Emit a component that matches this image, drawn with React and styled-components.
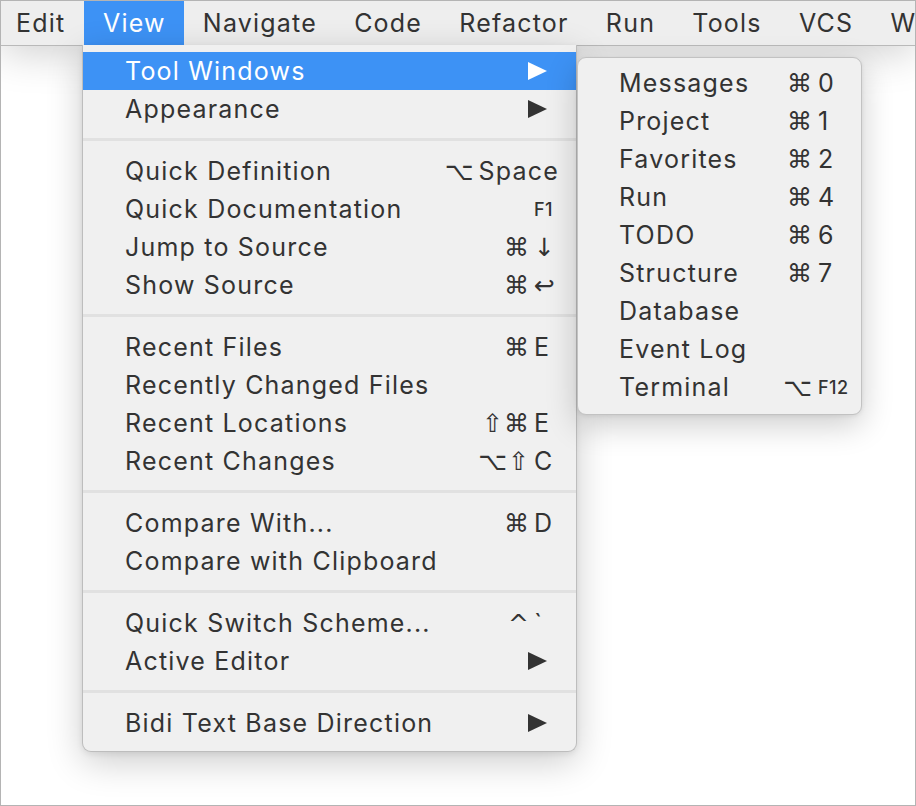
import React from 'react';
import styled, { createGlobalStyle } from 'styled-components';

const GlobalStyle = createGlobalStyle`
  html, body {
    margin: 0;
    padding: 0;
    background: #ffffff;
  }
  body {
    font-family: Inter, "Noto Sans", "DejaVu Sans", sans-serif;
    -webkit-font-smoothing: antialiased;
  }
`;

const BLUE = '#3d92f5';
const TEXT = '#333333';

const Frame = styled.div`
  position: relative;
  width: 916px;
  height: 806px;
  box-sizing: border-box;
  border: 1px solid #b4b4b4;
  overflow: hidden;
  background: #ffffff;
`;

const MenuBar = styled.div`
  position: relative;
  z-index: 1;
  display: flex;
  align-items: stretch;
  height: 44px;
  background: #eeeeee;
  border-bottom: 1px solid #b9b9b9;
  box-shadow: 0 4px 44px rgba(0, 0, 0, 0.22);
  white-space: nowrap;
`;

const BarItem = styled.div`
  display: flex;
  align-items: center;
  padding: 0 18.6px;
  font-size: 25px;
  letter-spacing: 1.2px;
  color: ${p => (p.$active ? '#ffffff' : TEXT)};
  background: ${p => (p.$active ? BLUE : 'transparent')};
  &:first-child {
    padding-left: 15px;
    padding-right: 19px;
  }
`;

const Menu = styled.div`
  position: absolute;
  z-index: 2;
  left: 81px;
  top: 44px;
  width: 495px;
  box-sizing: border-box;
  padding: 7px 0 9px;
  background: #f0f0f0;
  border: 1px solid #bdbdbd;
  border-top: none;
  border-radius: 0 0 9px 9px;
  box-shadow: 0 10px 36px rgba(0, 0, 0, 0.2), 0 2px 6px rgba(0, 0, 0, 0.08);
`;

const SubMenu = styled.div`
  position: absolute;
  z-index: 3;
  left: 494px;
  top: 12px;
  width: 285px;
  box-sizing: border-box;
  padding: 6px 0 8px;
  background: #f0f0f0;
  border: 1px solid #c2c2c2;
  border-radius: 9px;
  box-shadow: 0 10px 32px rgba(0, 0, 0, 0.2), 0 1px 4px rgba(0, 0, 0, 0.08);
`;

const Row = styled.div`
  display: flex;
  align-items: center;
  height: 38px;
  padding-left: ${p => p.$left}px;
  padding-right: ${p => p.$right}px;
  font-size: 25px;
  letter-spacing: 1.2px;
  color: ${p => (p.$active ? '#ffffff' : TEXT)};
  background: ${p => (p.$active ? BLUE : 'transparent')};
  white-space: nowrap;
`;

const Label = styled.span`
  flex: 1;
`;

const Shortcut = styled.span`
  display: flex;
  align-items: center;
  letter-spacing: 0;
`;

const Mods = styled.span`
  margin-right: ${p => p.$gap}px;
  font-family: "DejaVu Sans", sans-serif;
  font-size: 25px;
  letter-spacing: 1px;
`;

const Key = styled.span`
  min-width: ${p => p.$width}px;
  font-size: ${p => (p.$small ? 18 : 25)}px;
  font-weight: ${p => (p.$small ? 500 : 400)};
  letter-spacing: ${p => (p.$small ? 0.5 : 1.2)}px;
  font-family: ${p => (p.$glyph ? '"DejaVu Sans", sans-serif' : 'Inter, "DejaVu Sans", sans-serif')};
`;

const Separator = styled.div`
  height: 3px;
  margin: 10px 0 11px;
  background: #e1e1e1;
`;

const Arrow = ({ color }) => (
  <svg width="19" height="18" viewBox="0 0 19 18">
    <polygon points="0,0 19,9 0,18" fill={color} />
  </svg>
);

const mainSections = [
  [
    { label: 'Tool Windows', arrow: true, active: true },
    { label: 'Appearance', arrow: true },
  ],
  [
    { label: 'Quick Definition', mods: '⌥', key: 'Space' },
    { label: 'Quick Documentation', key: 'F1', small: true },
    { label: 'Jump to Source', mods: '⌘', key: '↓', glyph: true },
    { label: 'Show Source', mods: '⌘', key: '↩', glyph: true },
  ],
  [
    { label: 'Recent Files', mods: '⌘', key: 'E' },
    { label: 'Recently Changed Files' },
    { label: 'Recent Locations', mods: '⇧⌘', key: 'E' },
    { label: 'Recent Changes', mods: '⌥⇧', key: 'C' },
  ],
  [
    { label: 'Compare With...', mods: '⌘', key: 'D' },
    { label: 'Compare with Clipboard' },
  ],
  [
    { label: 'Quick Switch Scheme...', mods: '^', key: '`' },
    { label: 'Active Editor', arrow: true },
  ],
  [{ label: 'Bidi Text Base Direction', arrow: true }],
];

const toolWindows = [
  { label: 'Messages', mods: '⌘', key: '0' },
  { label: 'Project', mods: '⌘', key: '1' },
  { label: 'Favorites', mods: '⌘', key: '2' },
  { label: 'Run', mods: '⌘', key: '4' },
  { label: 'TODO', mods: '⌘', key: '6' },
  { label: 'Structure', mods: '⌘', key: '7' },
  { label: 'Database' },
  { label: 'Event Log' },
  { label: 'Terminal', mods: '⌥', key: 'F12', small: true },
];

const MenuRow = ({ item, left, keyWidth, gap, right, arrowRight }) => (
  <Row $left={left} $right={item.arrow ? arrowRight : right} $active={item.active}>
    <Label>{item.label}</Label>
    {item.arrow && <Arrow color={item.active ? '#ffffff' : '#333333'} />}
    {item.key && (
      <Shortcut>
        {item.mods && <Mods $gap={gap}>{item.mods}</Mods>}
        <Key $width={keyWidth} $small={item.small} $glyph={item.glyph}>
          {item.key}
        </Key>
      </Shortcut>
    )}
  </Row>
);

const barItems = ['Edit', 'View', 'Navigate', 'Code', 'Refactor', 'Run', 'Tools', 'VCS', 'Window'];

export default function App() {
  return (
    <>
      <GlobalStyle />
      <Frame>
        <MenuBar>
          {barItems.map(name => (
            <BarItem key={name} $active={name === 'View'}>
              {name}
            </BarItem>
          ))}
        </MenuBar>

        <Menu>
          {mainSections.map((section, i) => (
            <React.Fragment key={i}>
              {i > 0 && <Separator />}
              {section.map(item => (
                <MenuRow
                  key={item.label}
                  item={item}
                  left={42}
                  right={17}
                  arrowRight={29}
                  keyWidth={25}
                  gap={4}
                />
              ))}
            </React.Fragment>
          ))}

          <SubMenu>
            {toolWindows.map(item => (
              <MenuRow
                key={item.label}
                item={item}
                left={41}
                right={10}
                arrowRight={10}
                keyWidth={33}
                gap={5}
              />
            ))}
          </SubMenu>
        </Menu>
      </Frame>
    </>
  );
}
